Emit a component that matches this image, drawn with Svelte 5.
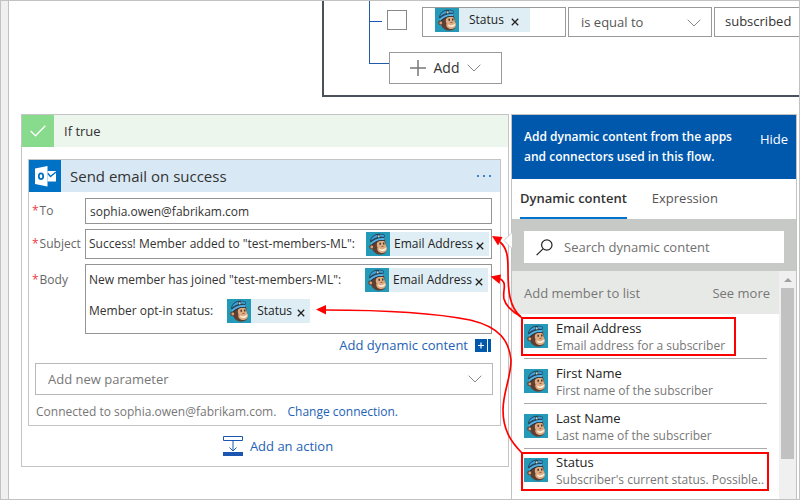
<script>
  let toAddress = $state('sophia.owen@fabrikam.com');
  let compareValue = $state('subscribed');
  let search = $state('');
  let activeTab = $state('dynamic');

  const fields = [
    { name: 'Email Address', note: 'Email address for a subscriber', mark: 'short' },
    { name: 'First Name', note: 'First name of the subscriber' },
    { name: 'Last Name', note: 'Last name of the subscriber' },
    { name: 'Status', note: "Subscriber's current status. Possible..", mark: 'long' }
  ];
</script>

{#snippet monkey()}
  <svg class="monkey" viewBox="0 0 24 24" aria-hidden="true">
    <rect width="24" height="24" fill="#2499b8" />
    <path d="M7 9C4.800 12 5.500 17.500 8 20C11 23.300 17 23.300 19.500 20.500C21.500 17.500 20 12 18.500 6.500L9 6.500Z" fill="#5f3f31" />
    <circle cx="5.600" cy="14.800" r="2.400" fill="#5f3f31" />
    <circle cx="5.800" cy="15" r="1.400" fill="#d9a277" />
    <path d="M12 9.500C13.500 8.300 17 8 18.500 9.500C19.800 11 19.500 13 20.300 14.500C21.800 16.500 21 20.500 16.500 21C12.500 21 10.500 18.300 11.500 15.500C10.500 13.500 10.500 11 12 9.500Z" fill="#dfab82" />
    <path d="M13 16.300C14.500 18 18 17.800 20.300 15.300C20.500 17.800 18.500 19.300 16 19.100C14 19 13 17.800 13 16.300Z" fill="#fff3e0" />
    <path d="M14.200 10.800V12.800M17.800 10.500V12.500" stroke="#33201a" stroke-width="1.300" />
    <path d="M15.500 14.500L17.500 14.300" stroke="#8a5a42" />
    <path d="M4 9.500C4.500 5 8 2.200 12 1.700C14.500 1.500 17.500 2 18.800 3L18.300 6C13.500 5.500 9 7 5 10.500Z" fill="#27455a" />
    <path d="M5 8.500C5.700 5.300 8.300 3.200 11.300 2.700L11 5.300C8.800 6 6.800 7.100 5 8.500Z" fill="#3ba3e0" />
    <path d="M14 2.500C15.500 2.500 17 2.700 18 3.300L17.800 4.900L14 4.600Z" fill="#3ba3e0" />
    <path d="M4.300 11.500C7.500 7.500 13 5.300 18.600 6.200L18.200 8C13.500 7.400 9 9 5.600 12.600Z" fill="#52b0e6" />
    <path d="M5.600 12.600C9 9 13.500 7.400 18.200 8L18 8.800C13.800 8.500 9.500 10 6.300 13.200Z" fill="#24323b" />
    <circle cx="12.700" cy="4.300" r="1.100" fill="#d9cfae" />
  </svg>
{/snippet}

{#snippet token(label)}
  <span class="token" contenteditable="false">
    {@render monkey()}
    <span class="token-name">{label}</span>
    <button class="remove" aria-label={`Remove ${label}`}>
      <svg width="8" height="8" viewBox="0 0 8 8" aria-hidden="true"><path d="M0.800 0.800L7.200 7.200M7.200 0.800L0.800 7.200" /></svg>
    </button>
  </span>
{/snippet}

{#snippet chevron()}
  <svg class="chevron" width="14" height="8" viewBox="0 0 14 8" aria-hidden="true"><path d="M0.700 0.700L7 7L13.300 0.700" /></svg>
{/snippet}

<div class="page">
  <div class="rail"></div>
  <main>
    <section class="condition">
      <div class="rule">
        <span class="stem"></span>
        <input class="pick" type="checkbox" aria-label="Select row" />
        <div class="operand" role="textbox" aria-label="Value" tabindex="0">{@render token('Status')}</div>
        <div class="dropdown compare">
          <select aria-label="Operator"><option>is equal to</option></select>
          {@render chevron()}
        </div>
        <input class="operand value" aria-label="Compare with" bind:value={compareValue} />
      </div>
      <div class="rule">
        <span class="stem last"></span>
        <button class="add">
          <svg width="16" height="16" viewBox="0 0 16 16" aria-hidden="true"><path d="M8 0V16M0 8H16" stroke="#777" stroke-width="1.500" /></svg>
          <span>Add</span>
          {@render chevron()}
        </button>
      </div>
    </section>

    <div class="lower">
      <section class="branch">
        <header class="branch-head">
          <span class="tick">
            <svg width="16" height="12" viewBox="0 0 16 12" aria-hidden="true"><path d="M0.700 6L5.500 10.800L15.300 0.800" fill="none" stroke="#fff" stroke-width="1.300" /></svg>
          </span>
          <span>If true</span>
        </header>

        <article class="card">
          <header class="card-head">
            <svg class="outlook" width="32" height="32" viewBox="0 0 32 32" aria-hidden="true">
              <rect width="32" height="32" fill="#0072c6" />
              <path d="M18.500 11H27V21.500H18.500Z" fill="#fff" />
              <path d="M18.500 13L21.500 16.500L27 12" fill="none" stroke="#0072c6" stroke-width="1.500" />
              <path d="M6 8.500L18.500 6V26.500L6 24Z" fill="#fff" />
              <ellipse cx="12" cy="16.300" rx="2.200" ry="2.900" fill="none" stroke="#0072c6" stroke-width="1.800" />
            </svg>
            <h2>Send email on success</h2>
            <button class="more" aria-label="More options"><i></i><i></i><i></i></button>
          </header>

          <div class="form">
            <label class="caption" for="to"><b>*</b>To</label>
            <input id="to" class="box" bind:value={toAddress} />

            <span class="caption" id="subject-label"><b>*</b>Subject</span>
            <div class="box subject" role="textbox" tabindex="0" aria-labelledby="subject-label">
              <span>Success! Member added to "test-members-ML":</span>{@render token('Email Address')}
            </div>

            <span class="caption body-caption" id="body-label"><b>*</b>Body</span>
            <div class="box body" role="textbox" tabindex="0" aria-labelledby="body-label">
              <div class="line first"><span>New member has joined "test-members-ML":</span>{@render token('Email Address')}</div>
              <div class="line second"><span>Member opt-in status:</span>{@render token('Status')}</div>
            </div>
          </div>

          <div class="dynamic">
            <button class="link">Add dynamic content</button>
            <svg width="16" height="13" viewBox="0 0 16 13" aria-hidden="true">
              <path d="M0 0H12V13H0ZM13 0H16V13H13Z" fill="#0058ad" />
              <path d="M6 3.500V9.500M3 6.500H9" stroke="#fff" stroke-width="1.200" />
            </svg>
          </div>

          <div class="dropdown parameter">
            <select aria-label="Add new parameter"><option>Add new parameter</option></select>
            {@render chevron()}
          </div>

          <p class="connection">Connected to sophia.owen@fabrikam.com. <a href="#connection">Change connection.</a></p>
        </article>

        <button class="link action">
          <svg width="20" height="20" viewBox="0 0 20 20" aria-hidden="true">
            <path d="M0.500 0.500H19.500V4.500H0.500Z" fill="#fff" stroke="#1b57b0" />
            <path d="M0 16H20V20H0Z" fill="#1b57b0" />
            <path d="M10 5V15M6.500 11.500L10 15L13.500 11.500" fill="none" stroke="#1b57b0" />
          </svg>
          <span>Add an action</span>
        </button>
      </section>

      <aside class="panel">
        <svg class="callout" width="9" height="17" viewBox="0 0 9 17" aria-hidden="true"><path d="M9 0.500L1 8.500L9 16.500" fill="#fff" stroke="#c8c8c8" /></svg>
        <header class="panel-head">
          <p>Add dynamic content from the apps and connectors used in this flow.</p>
          <button>Hide</button>
        </header>
        <div class="tabs" role="tablist">
          <button role="tab" aria-selected={activeTab === 'dynamic'} onclick={() => (activeTab = 'dynamic')}>Dynamic content</button>
          <button role="tab" aria-selected={activeTab === 'expression'} onclick={() => (activeTab = 'expression')}>Expression</button>
        </div>
        <div class="search-band">
          <label class="search">
            <svg width="17" height="17" viewBox="0 0 17 17" aria-hidden="true"><circle cx="10.800" cy="6" r="5.200" /><path d="M7 9.800L0.600 16.200" /></svg>
            <input type="text" aria-label="Search dynamic content" placeholder="Search dynamic content" bind:value={search} />
          </label>
        </div>
        <div class="results">
          <div class="list">
            <div class="group"><span>Add member to list</span><button>See more</button></div>
            <ul>
              {#each fields as field}
                <li class={field.mark}>
                  {@render monkey()}
                  <div><strong>{field.name}</strong><span>{field.note}</span></div>
                </li>
              {/each}
            </ul>
          </div>
          <div class="scroll" aria-hidden="true">
            <svg width="8" height="4" viewBox="0 0 8 4"><path d="M0 4L4 0L8 4Z" fill="#a0a0a0" /></svg>
            <span></span>
          </div>
        </div>
      </aside>
    </div>
  </main>

  <svg class="arrows" width="500" height="500" viewBox="300 0 500 500" aria-hidden="true">
    <path d="M500 242C507 248 508 256 508 270C508 290 509 307 521 317" />
    <path d="M498 278C509 282 502 290 504 299C506 307 513 311 521 317" />
    <path d="M325 310C390 310 440 314 470 320C500 327 509 341 511 360C511 378 503 392 503 410C503 430 511 442 522 453" />
    <path class="tip" d="M492 236L502.500 237L498 245.500Z" />
    <path class="tip" d="M490.500 276.500L501 274.500L499.500 284Z" />
    <path class="tip" d="M316 309.500L326 305V314.500Z" />
  </svg>
</div>

<style>
  :global(body) {
    margin: 0;
  }

  .page {
    position: relative;
    display: flex;
    box-sizing: border-box;
    height: 100vh;
    min-height: 500px;
    overflow: hidden;
    border: 1px solid #c2c2c2;
    background: #fff;
    color: #333;
    font: 13px/18px "Open Sans", "Noto Sans", sans-serif;
  }

  .page *,
  .page ::after {
    box-sizing: border-box;
  }

  button,
  input,
  select {
    margin: 0;
    padding: 0;
    border: 0;
    border-radius: 0;
    outline: 0;
    background: none;
    color: inherit;
    font: inherit;
  }

  button {
    cursor: pointer;
  }

  .rail {
    flex: 0 0 8px;
    border-right: 1px solid #c2c2c2;
    background: #f0f0f0;
  }

  main {
    display: flex;
    flex: 1;
    flex-direction: column;
    min-width: 0;
  }

  .condition {
    height: 96px;
    margin: 0 0 17px 313px;
    padding-left: 45px;
    overflow: hidden;
    border: solid #4a505c;
    border-width: 0 0 2px 2px;
  }

  .rule {
    display: flex;
    align-items: flex-start;
  }

  .stem {
    flex: 0 0 13px;
    height: 51px;
    margin-right: 5px;
    border-left: 1px solid #1f5cad;
    background: linear-gradient(#1f5cad, #1f5cad) 0 20px / 100% 1px no-repeat;
  }

  .stem.last {
    flex-basis: 20px;
    height: 12px;
    margin: 0;
    border-bottom: 1px solid #1f5cad;
    background: none;
  }

  .pick {
    flex: 0 0 20px;
    height: 20px;
    margin: 9px 15px 0 0;
    border: 1px solid #888;
    appearance: none;
  }

  .operand,
  .compare {
    flex: 0 0 144px;
    height: 30px;
    margin: 6px 2px 0 0;
    border: 1px solid #999;
  }

  .operand {
    padding-left: 12px;
  }

  .value {
    padding: 0 10px 2px;
  }

  .dropdown {
    position: relative;
    display: flex;
  }

  .dropdown select {
    flex: 1;
    padding-left: 12px;
    color: #555;
    appearance: none;
  }

  .dropdown .chevron {
    position: absolute;
    top: 11px;
    right: 10px;
    pointer-events: none;
  }

  .chevron path {
    fill: none;
    stroke: #888;
  }

  .add {
    display: flex;
    align-items: center;
    justify-content: center;
    gap: 8px;
    width: 113px;
    height: 32px;
    border: 1px solid #999;
    font-size: 14px;
  }

  .token {
    display: inline-flex;
    align-items: center;
    height: 24px;
    padding-right: 5px;
    background: #dfeef5;
    color: #222;
    font-size: 12px;
    white-space: nowrap;
  }

  .monkey {
    flex: 0 0 24px;
    height: 24px;
  }

  .token-name {
    padding: 0 3px 0 4px;
  }

  .second .token-name {
    padding: 0 5px 0 6px;
  }

  .operand .token {
    padding-right: 11px;
  }

  .operand .token-name {
    padding: 0 7px 0 10px;
  }

  .remove {
    display: flex;
    padding: 3px 0 0;
  }

  .remove path {
    stroke: #222;
    stroke-width: 1.3;
  }

  .lower {
    display: flex;
    flex: 1;
    gap: 2px;
    min-height: 0;
    padding: 0 2px 0 12px;
  }

  .branch {
    display: flex;
    flex: 1;
    flex-direction: column;
    align-self: flex-start;
    border: 1px solid #c4c4c4;
  }

  .branch-head {
    display: flex;
    align-items: center;
    gap: 10px;
    height: 32px;
    background: #ecf6ed;
  }

  .tick {
    display: flex;
    align-items: center;
    justify-content: center;
    width: 32px;
    height: 32px;
    background: #88da8d;
  }

  .card {
    margin: 12px 7px 0 6px;
    border: 1px solid #c4c4c4;
  }

  .card-head {
    display: flex;
    align-items: center;
    height: 32px;
    padding-right: 8px;
    background: #d8e9f5;
  }

  h2 {
    flex: 1;
    margin: 0 0 0 9px;
    font-size: 15px;
    font-weight: 400;
  }

  .more {
    display: flex;
    gap: 4px;
    padding: 8px 1px;
  }

  .more i {
    width: 2px;
    height: 2px;
    background: #3b83cb;
  }

  .form {
    display: grid;
    grid-template-columns: 53px 1fr;
    row-gap: 5px;
    padding: 6px 8px 0 3px;
  }

  .caption {
    display: flex;
    align-items: center;
    gap: 1px;
    color: #666;
    font-size: 12px;
  }

  .caption b {
    color: #e8404a;
    font-weight: 400;
  }

  .body-caption {
    align-self: start;
    padding-top: 7px;
  }

  .box {
    width: 100%;
    min-width: 0;
    border: 1px solid #949494;
    font-size: 12px;
    white-space: nowrap;
  }

  #to {
    height: 26px;
    padding: 0 4px;
    font-size: 12px;
  }

  .subject {
    display: flex;
    align-items: center;
    justify-content: space-between;
    height: 30px;
    padding: 0 2px 0 3px;
  }

  .body {
    display: flex;
    flex-direction: column;
    gap: 7px;
    height: 70px;
    padding: 3px 3px 0;
  }

  .line {
    display: flex;
    align-items: center;
    gap: 14px;
  }

  .first {
    justify-content: space-between;
  }

  .dynamic {
    display: flex;
    align-items: center;
    justify-content: flex-end;
    gap: 7px;
    height: 22px;
    margin-right: 9px;
  }

  .link,
  .connection a {
    color: #2362b5;
    text-decoration: none;
  }

  .parameter {
    height: 32px;
    margin: 7px 7px 0 6px;
    border: 1px solid #b8b8b8;
  }

  .parameter select {
    color: #777;
  }

  .connection {
    margin: 8px 7px 4px;
    color: #777;
    font-size: 12px;
  }

  .connection a {
    margin-left: 8px;
  }

  .action {
    display: flex;
    align-items: center;
    align-self: center;
    gap: 7px;
    height: 40px;
    padding-left: 26px;
  }

  .panel {
    position: relative;
    display: flex;
    flex: 0 0 286px;
    flex-direction: column;
    border: solid #c2c2c2;
    border-width: 1px 1px 0;
  }

  .callout {
    position: absolute;
    top: 117px;
    left: -9px;
  }

  .panel-head {
    display: flex;
    align-items: center;
    justify-content: space-between;
    height: 64px;
    padding: 0 8px 0 12px;
    background: #0058ad;
    color: #fff;
  }

  .panel-head p {
    width: 220px;
    margin: 0;
    font-size: 12px;
    font-weight: 600;
    line-height: 20px;
  }

  .panel-head button {
    margin-bottom: 16px;
  }

  .tabs {
    display: flex;
    gap: 25px;
    height: 40px;
    padding-left: 8px;
    color: #555;
  }

  .tabs button {
    border-bottom: 2px solid transparent;
  }

  .tabs button[aria-selected='true'] {
    border-color: #0072cf;
    color: #333;
    font-weight: 600;
  }

  .search-band {
    padding: 12px;
    height: 52px;
    background: #c7c9c6;
  }

  .search {
    display: flex;
    align-items: center;
    gap: 11px;
    height: 32px;
    padding: 0 12px;
    background: #fff;
  }

  .search circle,
  .search path {
    fill: none;
    stroke: #222;
    stroke-width: 1.2;
  }

  .search input {
    flex: 1;
    min-width: 0;
  }

  .search input::placeholder {
    color: #707070;
    opacity: 1;
  }

  .results {
    display: flex;
    flex: 1;
    min-height: 0;
  }

  .list {
    flex: 1;
    min-width: 0;
  }

  .group {
    display: flex;
    align-items: center;
    justify-content: space-between;
    height: 43px;
    padding: 0 9px 0 12px;
    background: #e7e9e6;
    color: #777;
  }

  ul {
    margin: 0;
    padding: 0 12px;
    list-style: none;
  }

  li {
    position: relative;
    display: flex;
    align-items: center;
    gap: 8px;
    height: 45px;
    border-bottom: 1px solid #aaa;
    font-size: 12px;
    line-height: 17px;
    white-space: nowrap;
  }

  li:last-child {
    height: 42px;
  }

  li div {
    padding-top: 2px;
  }

  li strong,
  li div span {
    display: block;
  }

  li strong {
    color: #222;
    font-size: 13px;
    font-weight: 500;
  }

  li div span {
    color: #777;
  }

  .short::after,
  .long::after {
    position: absolute;
    top: 3px;
    left: -3px;
    width: 215px;
    height: 39px;
    border: 2px solid #f00;
    content: '';
  }

  .long::after {
    width: 248px;
  }

  .scroll {
    display: flex;
    flex: 0 0 17px;
    flex-direction: column;
    align-items: center;
    gap: 6px;
    padding-top: 7px;
    background: #f0f0f0;
  }

  .scroll span {
    width: 13px;
    height: 171px;
    background: #c1c1c1;
  }

  .arrows {
    position: absolute;
    top: -1px;
    right: -1px;
    pointer-events: none;
  }

  .arrows path {
    fill: none;
    stroke: #f00;
    stroke-width: 1.7;
  }

  .arrows .tip {
    fill: #f00;
    stroke: none;
  }
</style>
